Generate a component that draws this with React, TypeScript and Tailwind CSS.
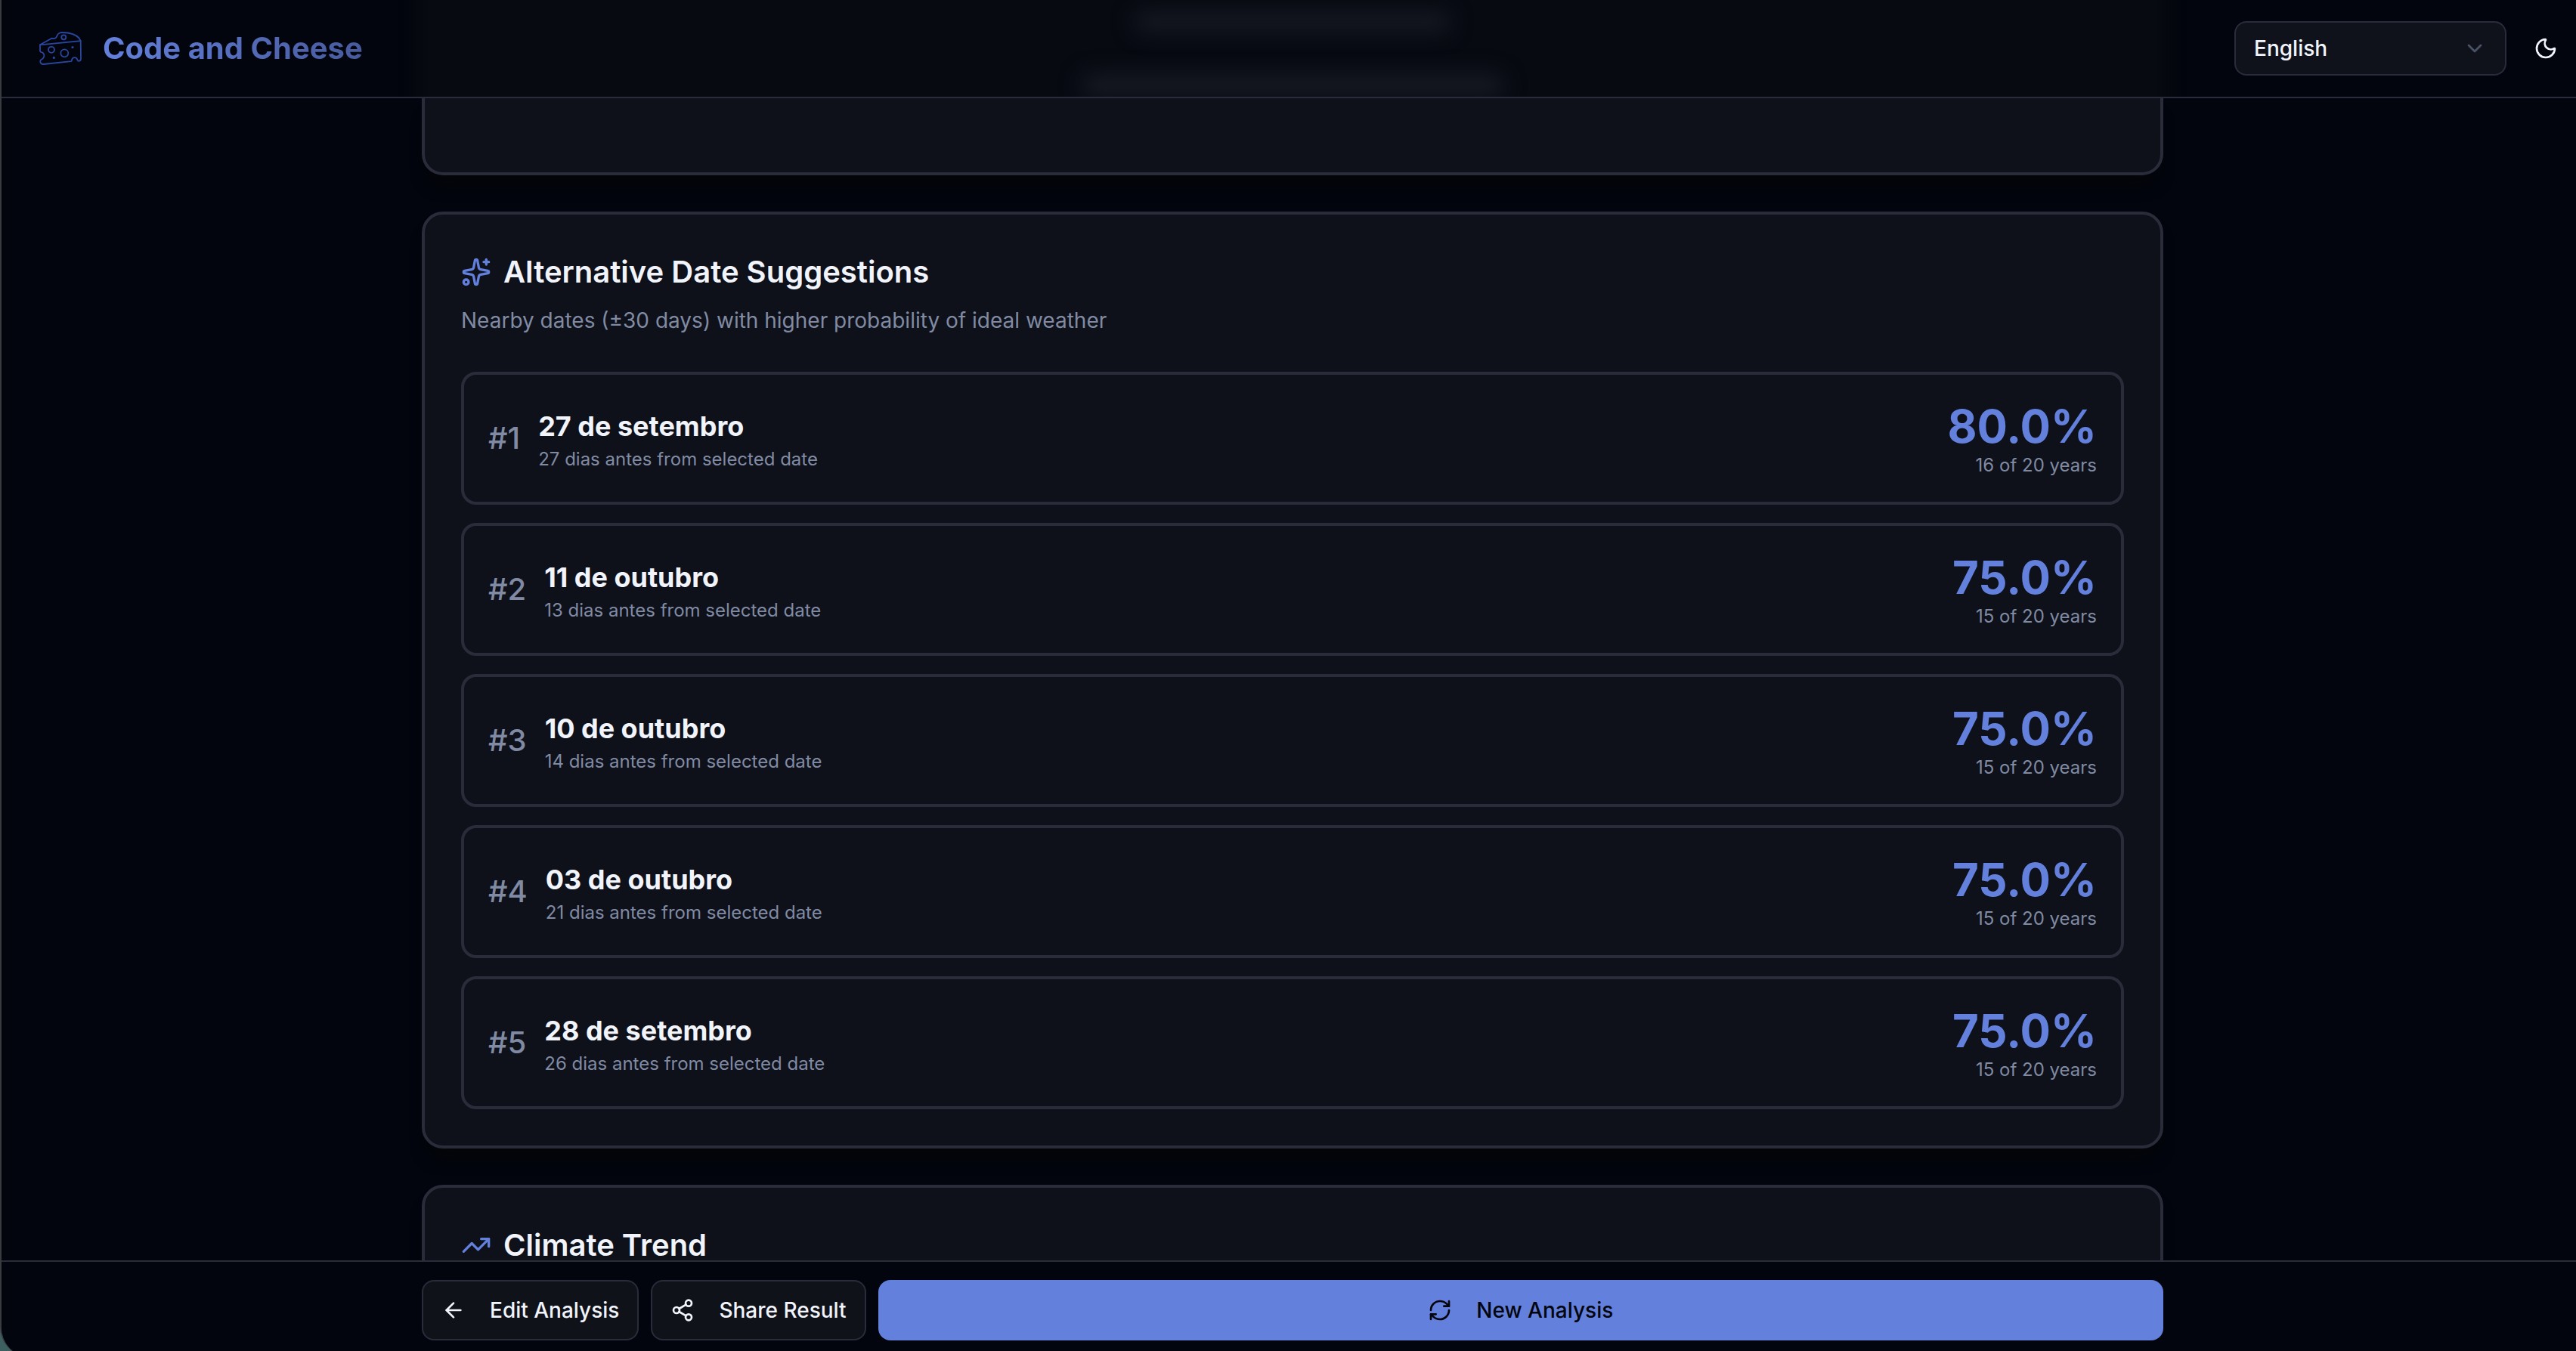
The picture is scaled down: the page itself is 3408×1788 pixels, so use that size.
import { ArrowLeft, ChevronDown, Moon, RefreshCw, Share2, Sparkles, TrendingUp } from 'lucide-react'

const suggestions = [
  { rank: 1, date: '27 de setembro', offset: '27 dias antes', chance: '80.0%', years: 16 },
  { rank: 2, date: '11 de outubro', offset: '13 dias antes', chance: '75.0%', years: 15 },
  { rank: 3, date: '10 de outubro', offset: '14 dias antes', chance: '75.0%', years: 15 },
  { rank: 4, date: '03 de outubro', offset: '21 dias antes', chance: '75.0%', years: 15 },
  { rank: 5, date: '28 de setembro', offset: '26 dias antes', chance: '75.0%', years: 15 },
]

const card = 'rounded-[28px] border-4 border-[#2a2c3a] bg-[#0e101a] shadow-[0_20px_24px_-12px_rgba(6,6,7,0.9)]'
const cardTitle = 'flex items-center gap-4 py-2 text-[40px] font-semibold leading-10'
const outlineButton =
  'flex h-20 items-center gap-8 rounded-2xl border-2 border-[#2a2c3a] bg-[#10121a] px-6 text-[28px] font-medium leading-10 text-[#f1f4fb]'

function CheeseLogo() {
  return (
    <svg
      viewBox="0 0 56 44"
      className="h-11 w-14 shrink-0"
      fill="none"
      stroke="#2a479f"
      strokeWidth="1.8"
      strokeLinejoin="round"
      strokeLinecap="round"
      aria-hidden="true"
    >
      <path d="M1 17.300 16.300 8.700C18 9.300 20 9.300 21.500 8.300 24 6.500 23.300 3.500 25.800 2.300L28.700 1C33 1 35 1 38 1.500 46 3 53 7 54.700 12.200L55 35.500C55 38 53.500 38.800 52 38.800 50.500 38.800 50.800 37.800 50.300 36.800 49 33.500 44.500 33.300 43.200 36.600 42.800 37.800 43.500 38.800 42 39.200L5.500 43C3 43.200 1.200 41.500 1.200 39 1.200 36.800 3.200 36.800 4.600 35.600 7 33 7 30 4.800 28 3.500 26.700 1 27.500 1 25.500Z" />
      <path d="M1 17.300 54.700 12.200" />
      <circle cx="32.300" cy="7.300" r="3" />
      <circle cx="16" cy="23.800" r="4" />
      <circle cx="33.300" cy="28.300" r="5" />
      <circle cx="44" cy="20.600" r="1.600" fill="#2a479f" stroke="none" />
      <circle cx="19.300" cy="34.400" r="1.600" fill="#2a479f" stroke="none" />
    </svg>
  )
}

export default function App() {
  return (
    <div className="h-screen overflow-hidden bg-[#3d5f5f] font-['Inter',sans-serif]">
      <div className="flex h-[calc(100vh+8px)] flex-col overflow-hidden rounded-bl-[40px] border-l-2 border-[#3a3b3e] bg-[#02050d] text-[#f1f4fb]">
        <header className="relative flex shrink-0 items-center justify-between overflow-hidden border-b-2 border-[#2a2c3a] py-7 pl-[50px] pr-1">
          <div className="absolute inset-0 flex flex-col items-center pl-2.5" aria-hidden="true">
            <div className="absolute -inset-y-8 w-full max-w-[2320px] bg-[#070a11] blur-[10px]" />
            <div className="relative mt-4 h-8 w-[420px] rounded-full bg-[#171924] blur-[14px]" />
            <div className="relative mt-14 h-9 w-[560px] rounded-full bg-[#171924] blur-[14px]" />
          </div>
          <a href="#" className="relative flex items-center gap-7">
            <CheeseLogo />
            <span className="bg-linear-to-r from-[#6380dc] to-[#475a9c] bg-clip-text text-[40px] font-bold leading-[56px] text-transparent">
              Code and Cheese
            </span>
          </a>
          <div className="relative flex items-center gap-4">
            <div className="relative">
              <select
                aria-label="Language"
                className="h-[72px] w-[360px] appearance-none rounded-2xl border-2 border-[#2a2c3a] bg-[#10121b] px-6 text-[28px] font-medium text-[#f1f4fb]"
              >
                <option>English</option>
              </select>
              <ChevronDown className="pointer-events-none absolute right-[26px] top-5 size-8 text-[#4a5365]" />
            </div>
            <button type="button" aria-label="Toggle theme" className="grid size-[72px] place-items-center">
              <Moon className="size-8" />
            </button>
          </div>
        </header>

        <main className="flex min-h-0 flex-1 flex-col overflow-hidden pl-2.5">
          <div className="mx-auto flex w-full max-w-[2304px] flex-col gap-12">
            <section className={`${card} h-[102px] shrink-0 rounded-t-none border-t-0`} />

            <section className={`${card} flex flex-col gap-12 p-12`}>
              <div className="flex flex-col gap-4">
                <h2 className={cardTitle}>
                  <Sparkles className="size-10 text-[#6380dc]" />
                  Alternative Date Suggestions
                </h2>
                <p className="text-[28px] leading-10 text-[#808ba3]">
                  Nearby dates (±30 days) with higher probability of ideal weather
                </p>
              </div>
              <ol className="flex flex-col gap-6">
                {suggestions.map((s) => (
                  <li key={s.rank} className="flex items-center justify-between rounded-[20px] border-4 border-[#2a2c3a] p-8">
                    <div className="flex items-center gap-6">
                      <span className="text-[40px] font-medium leading-[56px] text-[#808ba3]">#{s.rank}</span>
                      <div>
                        <h3 className="text-[36px] font-bold leading-[56px]">{s.date}</h3>
                        <p className="text-2xl leading-8 text-[#808ba3]">{s.offset} from selected date</p>
                      </div>
                    </div>
                    <div className="text-right">
                      <p className="text-[60px] font-bold leading-[72px] text-[#6380dc]">{s.chance}</p>
                      <p className="text-2xl leading-8 text-[#808ba3]">{s.years} of 20 years</p>
                    </div>
                  </li>
                ))}
              </ol>
            </section>

            <section className={`${card} p-12`}>
              <h2 className={cardTitle}>
                <TrendingUp className="size-10 text-[#6380dc]" />
                Climate Trend
              </h2>
            </section>
          </div>
        </main>

        <footer className="relative shrink-0 border-t-2 border-[#2a2c3a] bg-[#02050d] pb-[22px] pl-2.5 pt-6">
          <div className="mx-auto flex w-full max-w-[2304px] gap-4">
            <button type="button" className={outlineButton}>
              <ArrowLeft className="size-8" />
              Edit Analysis
            </button>
            <button type="button" className={outlineButton}>
              <Share2 className="size-8" />
              Share Result
            </button>
            <button
              type="button"
              className="flex h-20 flex-1 items-center justify-center gap-8 rounded-2xl bg-[#6380dc] text-[28px] font-medium leading-10 text-[#02050d]"
            >
              <RefreshCw className="size-8" />
              New Analysis
            </button>
          </div>
        </footer>
      </div>
    </div>
  )
}
